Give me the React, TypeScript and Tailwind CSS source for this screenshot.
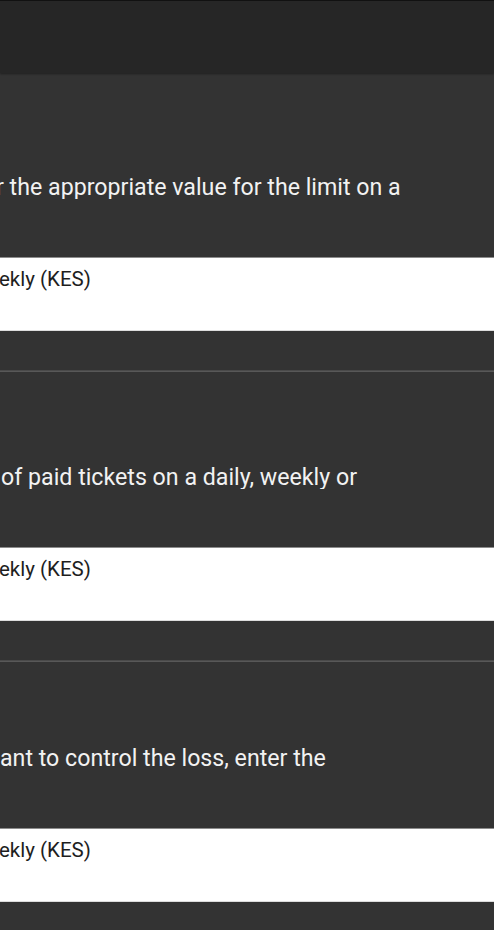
export default function App() {
  const sections = [
    { text: "r the appropriate value for the limit on a", shift: "-ml-[4px]", pt: "pt-[102px]" },
    { text: "of paid tickets on a daily, weekly or", shift: "ml-[1px]", pt: "pt-[93px]" },
    { text: "ant to control the loss, enter the", shift: "ml-0", pt: "pt-[84px]" },
  ];

  return (
    <div className="w-[494px] h-[930px] overflow-hidden bg-[#333333] font-['Roboto',sans-serif]">
      {/* Top bar */}
      <div className="h-[73px] bg-[#262626] border-t border-[#111111] shadow-[0_1px_2px_rgba(0,0,0,0.4)]" />

      {sections.map((s, i) => (
        <div key={i} className={s.pt}>
          <div className="overflow-hidden whitespace-nowrap">
            <p className={`${s.shift} text-[23.2px] leading-[24px] text-[#f2f2f2]`}>{s.text}</p>
          </div>
          <div className="mt-[58px] h-[74px] bg-white border-t border-[#8c8c8c] border-b border-b-[#dddddd] pt-[9px]">
            <span className="block -ml-[1px] text-[20.5px] leading-[24px] text-[#1e1e1e]">ekly (KES)</span>
          </div>
          {i < 2 && <div className="mt-[39px] h-[2px] bg-[#585858] border-t border-[#4a4a4a]" />}
        </div>
      ))}
    </div>
  );
}
